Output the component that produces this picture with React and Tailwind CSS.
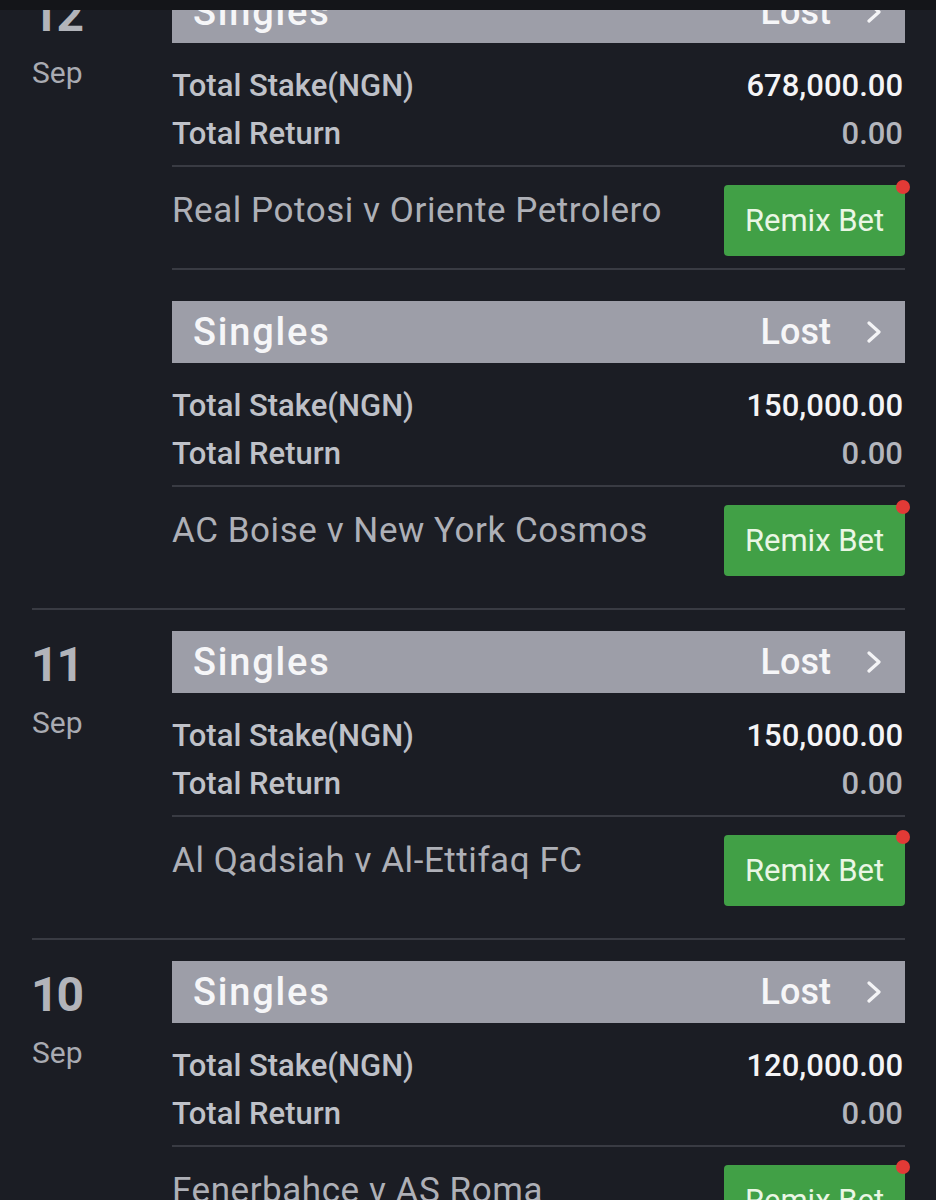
import React from "react";

const groups = [
  {
    day: "12",
    blocks: [
      { stake: "678,000.00", match: "Real Potosi v Oriente Petrolero" },
      { stake: "150,000.00", match: "AC Boise v New York Cosmos" },
    ],
  },
  { day: "11", blocks: [{ stake: "150,000.00", match: "Al Qadsiah v Al-Ettifaq FC" }] },
  { day: "10", blocks: [{ stake: "120,000.00", match: "Fenerbahce v AS Roma" }] },
];

function Chevron() {
  return (
    <svg width="16" height="22" viewBox="0 0 16 22" fill="none">
      <polyline points="3,2 13,11 3,20" stroke="#f4f4f6" strokeWidth="3.2" strokeLinecap="round" strokeLinejoin="round" />
    </svg>
  );
}

function Block({ b, last }) {
  return (
    <div className={last ? "pb-8" : "pb-3 border-b-2 border-[#393b43] mb-[31px]"}>
      <div className="h-[62px] bg-[#9d9ea8] flex items-center justify-between pl-[21px] pr-[23px]">
        <span className="text-[38px] tracking-[1.8px] font-medium text-[#f6f6f8] leading-none">Singles</span>
        <div className="flex items-center gap-[35px]">
          <span className="text-[36px] font-medium text-[#f6f6f8] leading-none">Lost</span>
          <Chevron />
        </div>
      </div>
      <div className="pt-[19px] pb-[7px] text-[31px] leading-[48px] font-medium">
        <div className="flex justify-between">
          <span className="text-[#bfc1c8]">Total Stake(NGN)</span>
          <span className="text-[#f4f4f6] mr-[2px]">{b.stake}</span>
        </div>
        <div className="flex justify-between">
          <span className="text-[#bfc1c8]">Total Return</span>
          <span className="text-[#b3b5bc] mr-[2px]">0.00</span>
        </div>
      </div>
      <div className="h-[2px] bg-[#393b43]" />
      <div className="flex justify-between items-start pt-[18px]">
        <span className="mt-[6px] text-[35px] tracking-[0.55px] leading-[40px] text-[#aeb0b7]">{b.match}</span>
        <div className="relative w-[181px] h-[71px] rounded-[4px] bg-[#41a046] flex items-center justify-center">
          <span className="text-[31px] text-[#eaf6e4] leading-none">Remix Bet</span>
          <span className="absolute -top-[5px] -right-[5px] w-[14px] h-[14px] rounded-full bg-[#e23a36]" />
        </div>
      </div>
    </div>
  );
}

export default function App() {
  return (
    <div
      className="relative h-[1200px] w-[936px] overflow-hidden bg-[#1b1d24]"
      style={{ fontFamily: "Roboto, 'Liberation Sans', sans-serif" }}
    >
      <div className="absolute top-0 inset-x-0 h-[10px] bg-[#141519] z-10" />
      <div className="pl-8 pr-[31px] -mt-[40px]">
        {groups.map((g) => (
          <div key={g.day} className="flex border-b-2 border-[#393b43] pt-[21px]">
            <div className="w-[140px] shrink-0 pt-[10px]">
              <div className="-ml-[1px] text-[48px] tracking-[-2px] leading-[48px] font-bold text-[#b2b4ba]">{g.day}</div>
              <div className="mt-[19px] text-[30px] leading-[30px] text-[#a9abb2]">Sep</div>
            </div>
            <div className="flex-1">
              {g.blocks.map((b, i) => (
                <Block key={i} b={b} last={i === g.blocks.length - 1} />
              ))}
            </div>
          </div>
        ))}
      </div>
    </div>
  );
}
